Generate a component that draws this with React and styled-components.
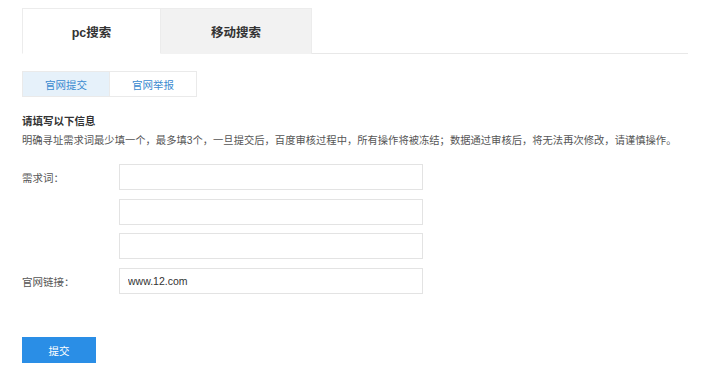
import { useState } from 'react';
import styled, { createGlobalStyle } from 'styled-components';

const GlobalStyle = createGlobalStyle`
  body {
    margin: 0;
    background: #fff;
    font-family: "Liberation Sans", "Noto Sans CJK SC", sans-serif;
    color: #333;
  }
`;

const Page = styled.div`
  padding: 8px 0 0 22px;
`;

const TabBar = styled.div`
  display: flex;
  width: 666px;
  height: 46px;
  border-bottom: 1px solid #e8e8e8;
  box-sizing: border-box;
`;

const Tab = styled.div`
  width: ${p => p.$width}px;
  height: 46px;
  box-sizing: border-box;
  display: flex;
  align-items: center;
  justify-content: center;
  font-size: 12.5px;
  font-weight: bold;
  color: #333;
  background: ${p => (p.$active ? '#fff' : '#f2f2f2')};
  border-top: 1px solid #ececec;
  border-left: ${p => (p.$active ? '1px solid #ececec' : 'none')};
  border-right: 1px solid #ececec;
  border-bottom: ${p => (p.$active ? '1px solid #fff' : 'none')};
  cursor: pointer;
`;

const SubTabs = styled.div`
  display: flex;
  margin-top: 17px;
`;

const SubTab = styled.div`
  width: ${p => p.$width}px;
  height: 26px;
  box-sizing: border-box;
  display: flex;
  align-items: center;
  justify-content: center;
  font-size: 10.5px;
  color: #3a8ad0;
  background: ${p => (p.$active ? '#e6f1fa' : '#fff')};
  border: 1px solid #eaeaea;
  border-left: ${p => (p.$first ? '1px solid #eaeaea' : 'none')};
  cursor: pointer;
`;

const Heading = styled.div`
  margin-top: 14px;
  font-size: 10.5px;
  line-height: 20px;
  font-weight: bold;
  color: #333;
`;

const Note = styled.div`
  font-size: 10.3px;
  line-height: 20px;
  color: #555;
  white-space: nowrap;
`;

const Form = styled.div`
  display: flex;
  flex-direction: column;
  gap: 8.7px;
  margin-top: 13px;
`;

const Row = styled.div`
  display: flex;
  align-items: center;
`;

const Label = styled.div`
  width: 97px;
  font-size: 10.5px;
  color: #555;
`;

const Input = styled.input`
  width: 304px;
  height: 26px;
  box-sizing: border-box;
  border: 1px solid #e3e3e3;
  padding: 0 8px;
  font-family: "Liberation Sans", "Noto Sans CJK SC", sans-serif;
  font-size: 10.5px;
  color: #333;
  outline: none;
`;

const Submit = styled.button`
  margin-top: 43px;
  width: 74px;
  height: 26px;
  border: none;
  background: #2a8ee6;
  color: #fff;
  font-family: "Liberation Sans", "Noto Sans CJK SC", sans-serif;
  font-size: 10.5px;
  cursor: pointer;
`;

export default function App() {
  const [tab, setTab] = useState('pc');
  const [sub, setSub] = useState('submit');
  const [words, setWords] = useState(['', '', '']);
  const [url, setUrl] = useState('www.12.com');

  const setWord = (i, v) => setWords(words.map((w, j) => (j === i ? v : w)));

  return (
    <Page>
      <GlobalStyle />
      <TabBar>
        <Tab $width={139} $active={tab === 'pc'} onClick={() => setTab('pc')}>pc搜索</Tab>
        <Tab $width={151} $active={tab === 'mobile'} onClick={() => setTab('mobile')}>移动搜索</Tab>
      </TabBar>
      <SubTabs>
        <SubTab $width={88} $first $active={sub === 'submit'} onClick={() => setSub('submit')}>官网提交</SubTab>
        <SubTab $width={87} $active={sub === 'report'} onClick={() => setSub('report')}>官网举报</SubTab>
      </SubTabs>
      <Heading>请填写以下信息</Heading>
      <Note>明确寻址需求词最少填一个，最多填3个，一旦提交后，百度审核过程中，所有操作将被冻结；数据通过审核后，将无法再次修改，请谨慎操作。</Note>
      <Form>
        {words.map((w, i) => (
          <Row key={i}>
            <Label>{i === 0 ? '需求词：' : ''}</Label>
            <Input value={w} onChange={e => setWord(i, e.target.value)} />
          </Row>
        ))}
        <Row>
          <Label>官网链接：</Label>
          <Input value={url} onChange={e => setUrl(e.target.value)} />
        </Row>
      </Form>
      <Submit>提交</Submit>
    </Page>
  );
}
